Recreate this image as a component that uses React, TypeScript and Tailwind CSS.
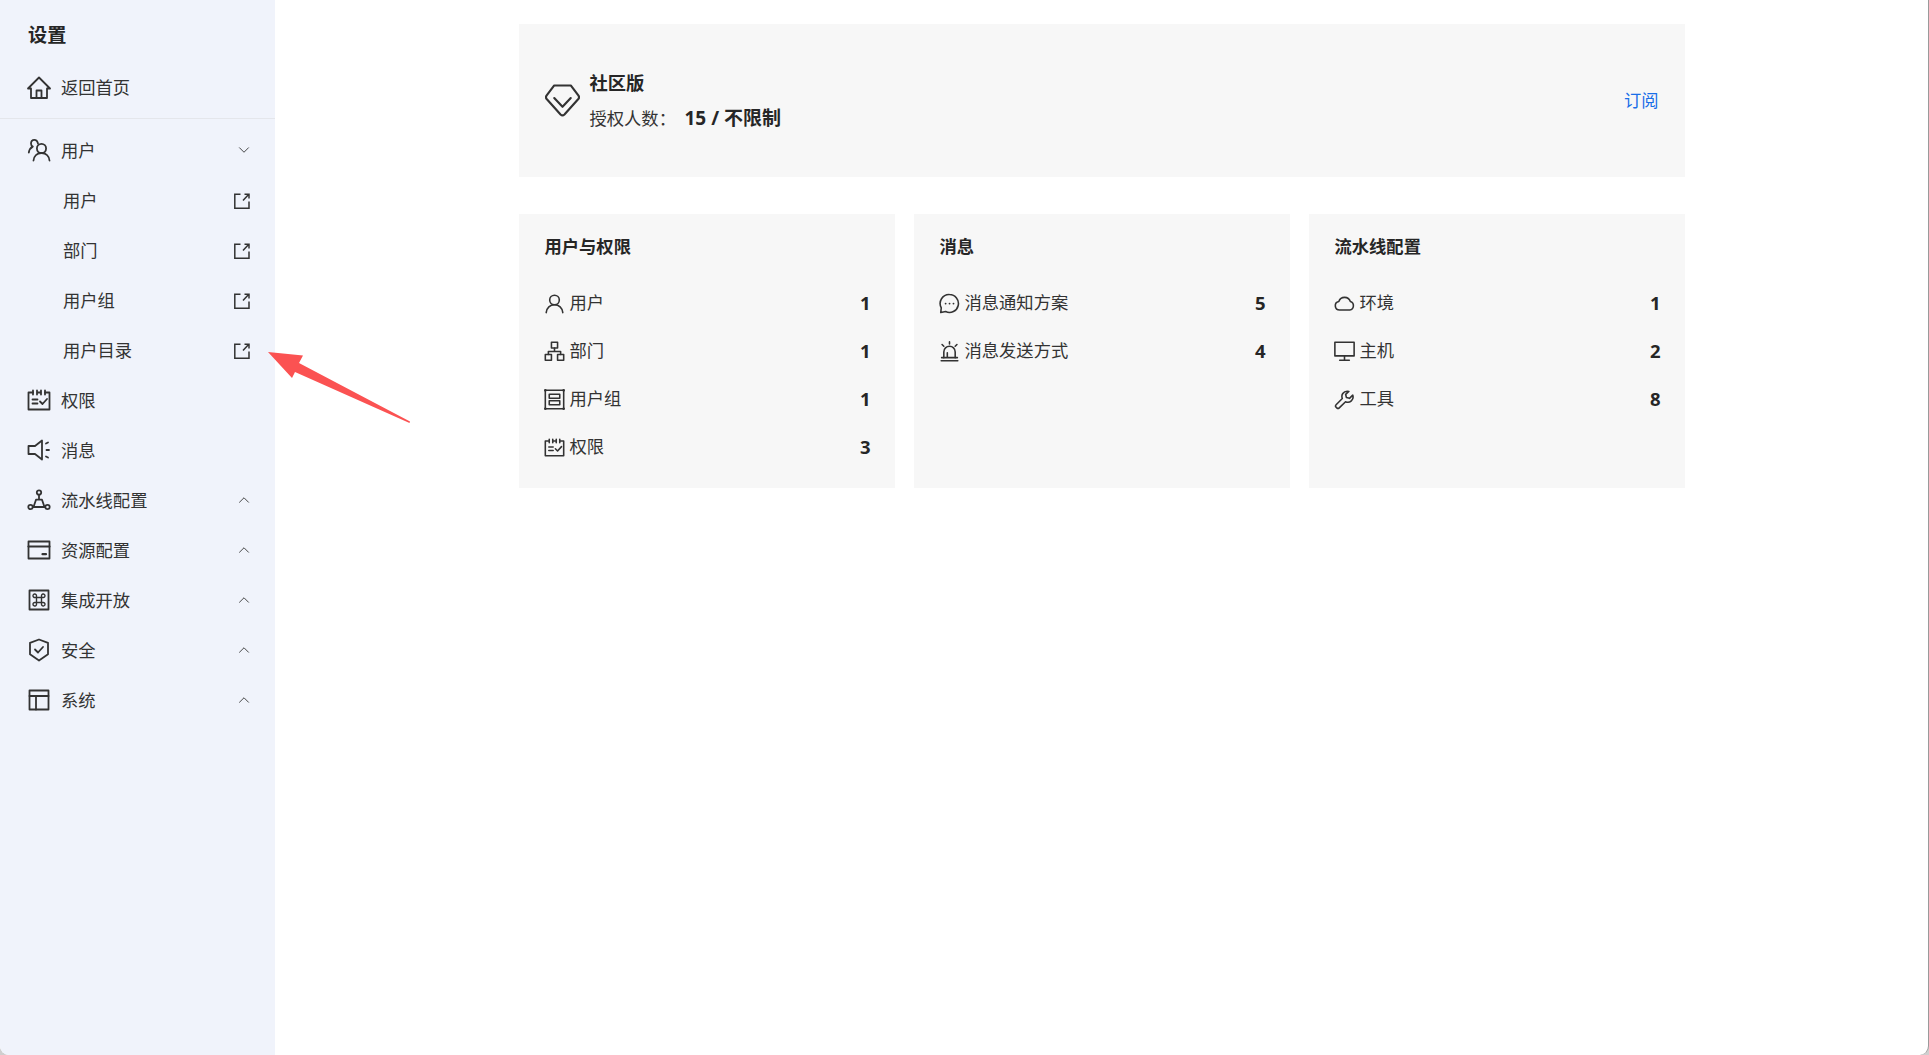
import React from 'react';
import { ChevronDown, ChevronUp } from 'lucide-react';

const FONT = '[font-family:"Noto_Sans","Noto_Sans_CJK_SC",sans-serif]';

type IconProps = { size?: number; children: React.ReactNode };

function Icon({ size = 24, children }: IconProps) {
  return (
    <svg
      width={size}
      height={size}
      viewBox="0 0 24 24"
      fill="none"
      stroke="#333"
      strokeWidth={1.8}
      strokeLinecap="round"
      strokeLinejoin="round"
      className="shrink-0"
    >
      {children}
    </svg>
  );
}

const HomeGlyph = (
  <>
    <path d="M1 12.500 12 1.500l11 11h-3v9.500H4v-9.500z" />
    <path d="M9.500 22v-7.500h5V22" />
  </>
);
const UsersGlyph = (
  <>
    <circle cx="14.500" cy="10.500" r="4.600" />
    <path d="M6.500 22.500c.4-4.500 3.500-7.500 8-7.500s7.600 3 8 7.500" />
    <path d="M11 5.500C10.500 3.200 9 1.800 7.300 1.800 5.200 1.800 4 3.500 4 5.400c0 1.400.7 2.600 1.800 3.200C3.800 9.600 2.300 11.500 1.800 14.500" />
  </>
);
const CalendarGlyph = (
  <>
    <path d="M6 4.500H1.500v17h21v-17H18" />
    <path d="M6 2.500v4M10 4.500h4M10 2.500v4M14 2.500v4M18 2.500v4" />
    <path d="M5.500 11.500h5M5.500 15.500h5" />
    <path d="m13 13.500 2.500 2.500 4.500-5" />
  </>
);
const SpeakerGlyph = (
  <>
    <path d="M15 2.500v19l-7-5.500H1.500V8H8z" />
    <path d="M19 5.500l2-1M19.500 12h2.500M19 18.500l2 1" />
  </>
);
const PipelineGlyph = (
  <>
    <circle cx="12" cy="4.500" r="2.200" />
    <circle cx="3.500" cy="19" r="2.200" />
    <circle cx="20.500" cy="19" r="2.200" />
    <path d="M12 6.700v5M5.700 19h2.500M15.800 19h2.500M9 11.700h6l2.500 7.300h-11z" />
  </>
);
const CardGlyph = (
  <>
    <rect x="1.500" y="3.500" width="21" height="17" />
    <path d="M1.500 8.500h21" strokeWidth={2.200} />
    <path d="M15.500 16.200h3.500" strokeWidth={2.200} />
  </>
);
const CommandGlyph = (
  <>
    <rect x="2.500" y="2.500" width="19" height="19" />
    <path
      d="M9.500 9.500h5v5h-5zM9.500 9.500H8a1.750 1.750 0 1 1 1.500-1.750zM14.500 9.500V8a1.750 1.750 0 1 1 1.750 1.500zM14.500 14.500H16a1.750 1.750 0 1 1-1.500 1.750zM9.500 14.500V16a1.750 1.750 0 1 1-1.750-1.500z"
      strokeWidth={1.400}
    />
  </>
);
const ShieldGlyph = (
  <>
    <path d="M12 1.500 21 4.800v11.500L12 22.500 3 16.300V4.800z" />
    <path d="m8 11.500 3 3 5-5.500" />
  </>
);
const PanelGlyph = (
  <>
    <rect x="2.500" y="2.500" width="19" height="19" />
    <path d="M2.500 8h19M9 8v13.500" />
  </>
);
const UserGlyph = (
  <>
    <circle cx="12" cy="8" r="5.500" />
    <path d="M2.500 22.500c.5-5.500 4.500-9 9.500-9s9 3.500 9.500 9" />
  </>
);
const OrgGlyph = (
  <>
    <rect x="8.500" y="1.500" width="7" height="6.500" />
    <rect x="1.500" y="15.500" width="7" height="6.500" />
    <rect x="15.500" y="15.500" width="7" height="6.500" />
    <path d="M12 8v4M5 15.500V12h14v3.500" />
  </>
);
const GroupGlyph = (
  <>
    <rect x="1.500" y="1.500" width="21" height="21" />
    <rect x="6" y="6" width="12" height="4.500" />
    <rect x="6" y="13.500" width="12" height="4.500" />
    <circle cx="1.500" cy="1.500" r=".6" />
    <circle cx="22.500" cy="1.500" r=".6" />
    <circle cx="1.500" cy="22.500" r=".6" />
    <circle cx="22.500" cy="22.500" r=".6" />
  </>
);
const ChatGlyph = (
  <>
    <path d="M12 1.800a10.200 10.200 0 1 1-4.400 19.400L2 22.300l.6-5.400A10.200 10.200 0 0 1 12 1.800z" />
    <path d="M7.500 12h.1M12 12h.1M16.500 12h.1" strokeWidth={2} />
  </>
);
const AlarmGlyph = (
  <>
    <path d="M5.500 19V12.500a6.500 6.500 0 0 1 13 0V19" />
    <path d="M2.500 22.500h19M3 19h18" />
    <path d="M9.500 18.500v-5M12 1v2.500M3.500 4l2 2M20.500 4l-2 2" />
  </>
);
const CloudGlyph = (
  <path d="M6.500 19.500a5 5 0 0 1-1-9.900A7 7 0 0 1 18.700 9.800a5 5 0 0 1-.7 9.700z" />
);
const MonitorGlyph = (
  <>
    <rect x="1" y="1.500" width="22" height="15.500" />
    <path d="M12 17v5M6.500 22h11" />
  </>
);
const WrenchGlyph = (
  <path d="M15 2.500a6 6 0 0 0-5.500 8.300L2.400 18a2 2 0 0 0 0 2.800l.8.800a2 2 0 0 0 2.800 0l7.200-7.100A6 6 0 0 0 21.400 7l-3.700 3.700-3.500-1-.9-3.500L17 2.800a6 6 0 0 0-2-.3z" />
);

function SideRow({ icon, label, chevron }: { icon: React.ReactNode; label: string; chevron?: 'up' | 'down' }) {
  return (
    <div className="flex h-[50px] items-center pl-[27px] pr-[22px]">
      <Icon>{icon}</Icon>
      <span className="ml-[10px] flex-1 pt-px text-[17.300px] text-[#333]">{label}</span>
      {chevron === 'down' && <ChevronDown size={18} strokeWidth={1.200} color="#333" />}
      {chevron === 'up' && <ChevronUp size={18} strokeWidth={1.200} color="#333" />}
    </div>
  );
}

function SubRow({ label }: { label: string }) {
  return (
    <div className="flex h-[50px] items-center pt-px pl-[63px] pr-[25px]">
      <span className="flex-1 text-[17.300px] text-[#333]">{label}</span>
      <svg width="16" height="16" viewBox="0 0 16 16" fill="none" stroke="#333" strokeWidth={1.500}>
        <path d="M6.500 1.200H.8v14H15V8.500" />
        <path d="M9 7.500 14.800 1.200M10.500 1.200h4.500v4.300" />
      </svg>
    </div>
  );
}

function StatRow({ icon, label, count }: { icon: React.ReactNode; label: string; count: number }) {
  return (
    <div className="flex h-[48px] items-center">
      <div className="-ml-px">
        <Icon size={21}>{icon}</Icon>
      </div>
      <span className="ml-[5px] flex-1 text-[17.300px] text-[#333]">{label}</span>
      <span className="-mr-[2px] text-[18.500px] font-bold text-[#262626]">{count}</span>
    </div>
  );
}

function StatCard({ title, children }: { title: string; children: React.ReactNode }) {
  return (
    <div className="h-[274px] bg-[#f7f7f7] px-[26px] pt-[20px]">
      <div className="mb-[19px] h-[26px] text-[17.300px] leading-[26px] font-bold text-[#262626]">{title}</div>
      {children}
    </div>
  );
}

export default function App() {
  return (
    <div className={`h-screen w-full bg-[#cfcfcf] ${FONT}`}>
      <div className="relative flex h-full overflow-hidden rounded-b-[9px] border-r border-[#9a9a9a] bg-white">
        <aside className="flex w-[275px] shrink-0 flex-col bg-[#f0f3fb]">
          <div className="flex h-[70px] items-center pl-[28px] text-[19.200px] font-bold text-[#262626]">设置</div>
          <div className="flex h-[36px] items-center pl-[27px]">
            <Icon>{HomeGlyph}</Icon>
            <span className="ml-[10px] text-[17.300px] text-[#333]">返回首页</span>
          </div>
          <div className="mt-[12px] mb-[6px] h-px bg-[#e4e6eb]" />
          <SideRow icon={UsersGlyph} label="用户" chevron="down" />
          <SubRow label="用户" />
          <SubRow label="部门" />
          <SubRow label="用户组" />
          <SubRow label="用户目录" />
          <SideRow icon={CalendarGlyph} label="权限" />
          <SideRow icon={SpeakerGlyph} label="消息" />
          <SideRow icon={PipelineGlyph} label="流水线配置" chevron="up" />
          <SideRow icon={CardGlyph} label="资源配置" chevron="up" />
          <SideRow icon={CommandGlyph} label="集成开放" chevron="up" />
          <SideRow icon={ShieldGlyph} label="安全" chevron="up" />
          <SideRow icon={PanelGlyph} label="系统" chevron="up" />
        </aside>

        <main className="flex flex-1 justify-center pt-[24px]">
          <div className="w-[1166px]">
            <div className="flex h-[153px] items-center bg-[#f7f7f7] px-[26px]">
              <svg width="35" height="33" viewBox="0 0 36 34" fill="none" stroke="#333" strokeWidth={2.200} strokeLinecap="round" strokeLinejoin="round" className="shrink-0">
                <path d="M9.500 1.500h17l8 10.500a3 3 0 0 1-.2 3.500L20 31.500a3 3 0 0 1-4 0L1.700 15.500a3 3 0 0 1-.2-3.500z" />
                <path d="m9.500 14.500 8.500 9 8.500-9" />
              </svg>
              <div className="ml-[10px] flex-1">
                <div className="h-[36px] text-[18.300px] leading-[36px] font-bold text-[#262626]">社区版</div>
                <div className="flex h-[36px] items-center text-[17.300px]">
                  <span className="w-[95px] text-[#333]">授权人数：</span>
                  <span className="text-[19px] font-bold text-[#262626]">15 / 不限制</span>
                </div>
              </div>
              <span className="text-[17.300px] text-[#1a6fe8]">订阅</span>
            </div>

            <div className="mt-[37px] grid grid-cols-3 gap-[19px]">
              <StatCard title="用户与权限">
                <StatRow icon={UserGlyph} label="用户" count={1} />
                <StatRow icon={OrgGlyph} label="部门" count={1} />
                <StatRow icon={GroupGlyph} label="用户组" count={1} />
                <StatRow icon={CalendarGlyph} label="权限" count={3} />
              </StatCard>
              <StatCard title="消息">
                <StatRow icon={ChatGlyph} label="消息通知方案" count={5} />
                <StatRow icon={AlarmGlyph} label="消息发送方式" count={4} />
              </StatCard>
              <StatCard title="流水线配置">
                <StatRow icon={CloudGlyph} label="环境" count={1} />
                <StatRow icon={MonitorGlyph} label="主机" count={2} />
                <StatRow icon={WrenchGlyph} label="工具" count={8} />
              </StatCard>
            </div>
          </div>
        </main>

        {/* red annotation arrow drawn on top of the screenshot */}
        <svg width="160" height="90" viewBox="0 0 160 90" className="absolute top-[345px] left-[260px]">
          <path d="M8 7 43 10.500 39 18 150 76.500 149.500 78 35 27 32 33z" fill="#fb5252" />
        </svg>
      </div>
    </div>
  );
}
